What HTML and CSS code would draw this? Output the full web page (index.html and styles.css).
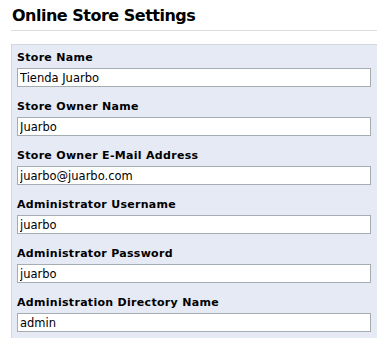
FILE: index.html
```html
<!doctype html>
<html lang="en">
<head>
  <title>Online Store Settings</title>
  <meta charset="utf-8">
  <link rel="stylesheet" href="styles.css">
</head>
<body>

<div id="page">
  <h1 class="title">Online Store Settings</h1>

  <form class="settings">
    <div class="field">
      <label for="store_name">Store Name</label>
      <input type="text" id="store_name" value="Tienda Juarbo">
    </div>
    <div class="field">
      <label for="store_owner">Store Owner Name</label>
      <input type="text" id="store_owner" value="Juarbo">
    </div>
    <div class="field">
      <label for="store_email">Store Owner E-Mail Address</label>
      <input type="text" id="store_email" value="juarbo@juarbo.com">
    </div>
    <div class="field">
      <label for="admin_user">Administrator Username</label>
      <input type="text" id="admin_user" value="juarbo">
    </div>
    <div class="field">
      <label for="admin_pass">Administrator Password</label>
      <input type="text" id="admin_pass" value="juarbo">
    </div>
    <div class="field">
      <label for="admin_dir">Administration Directory Name</label>
      <input type="text" id="admin_dir" value="admin">
    </div>
  </form>
</div>

</body>
</html>
```

FILE: styles.css
```css
html {
  height: 100%;
}

body {
  margin: 0;
  padding: 0;
  background: #ffffff;
  color: #000000;
  font-family: "DejaVu Sans", Verdana, sans-serif;
  font-size: 11px;
}

#page {
  padding: 0 0 0 11px;
}

.title {
  margin: 0;
  padding: 6px 0 4px 1px;
  font-size: 16px;
  line-height: 20px;
  font-weight: bold;
  letter-spacing: -0.5px;
  border-bottom: 1px solid #dcdcdc;
}

.settings {
  margin: 13px 0 0 0;
  padding: 6px 6px 6px 5px;
  background-color: #e6eaf5;
  border-top: 1px solid #d3d7e2;
  border-left: 1px solid #d3d7e2;
}

.field {
  display: flex;
  flex-direction: column;
  gap: 3px;
  margin-bottom: 13px;
}

.field:last-child {
  margin-bottom: 0;
}

.field label {
  font-weight: bold;
  font-size: 11px;
  line-height: 14px;
  letter-spacing: 0.3px;
}

.field input {
  box-sizing: border-box;
  height: 19px;
  margin: 0;
  padding: 0 0 0 2px;
  border: 1px solid #a5acb2;
  background: #ffffff;
  font-family: "DejaVu Sans", Verdana, sans-serif;
  font-size: 11.5px;
  color: #000000;
}
```
